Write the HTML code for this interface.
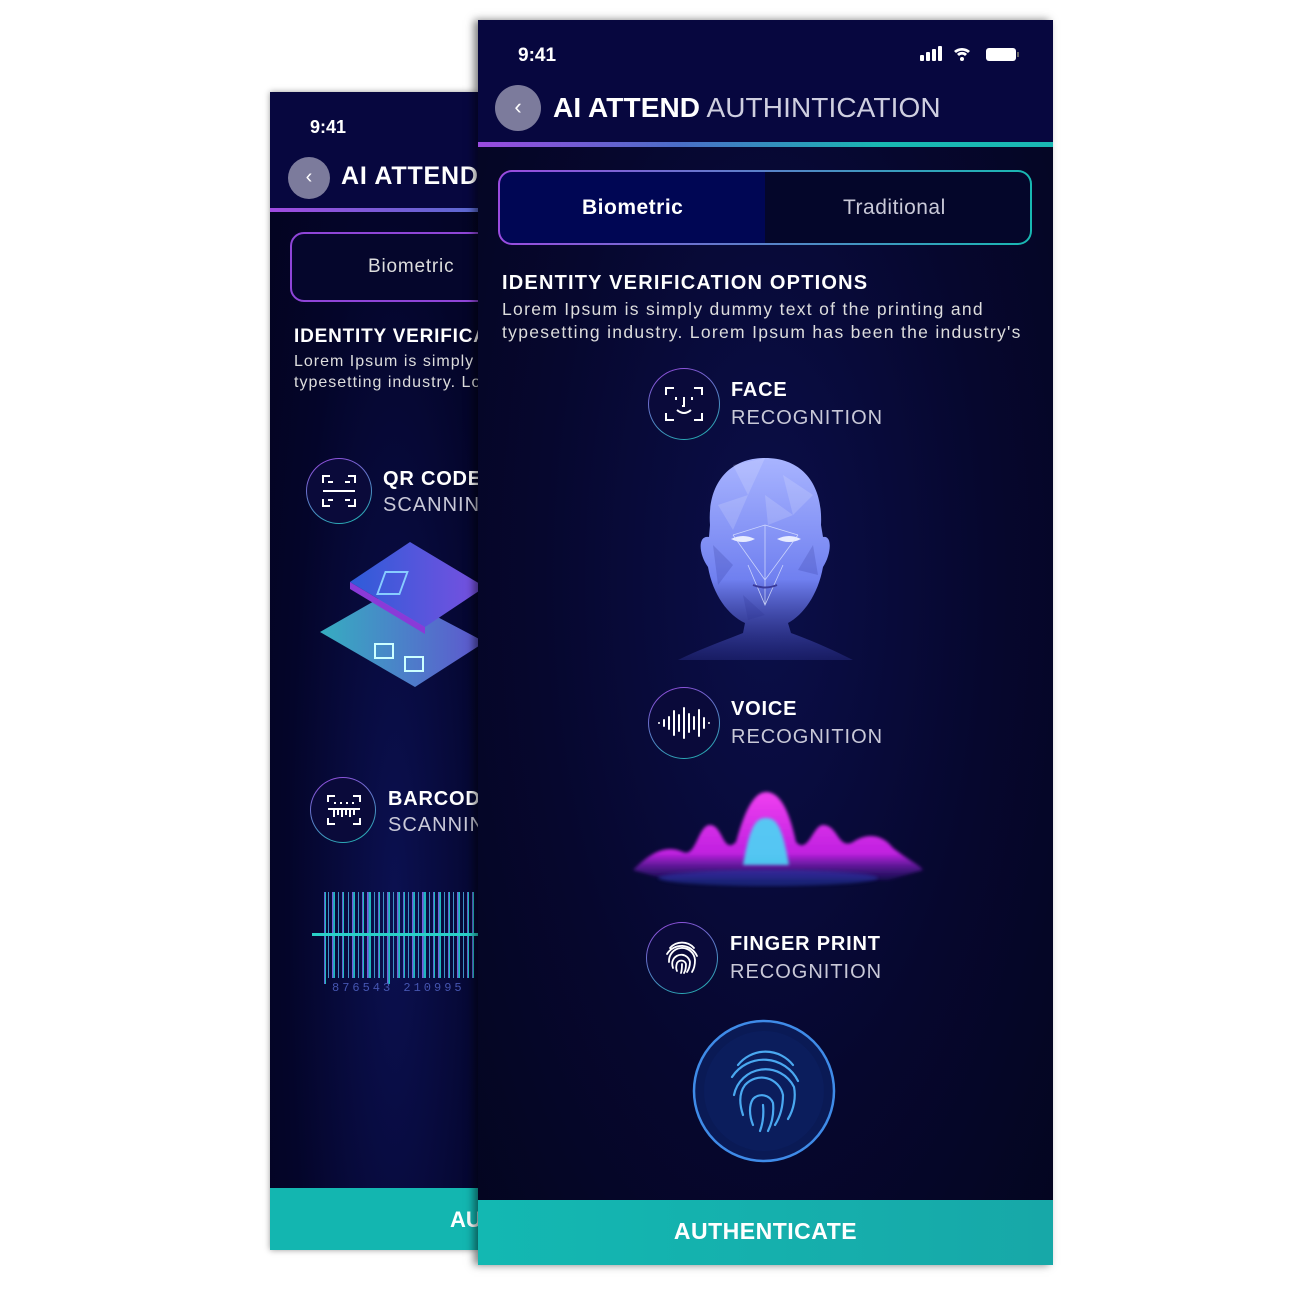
<!DOCTYPE html>
<html><head><meta charset="utf-8">
<style>
*{margin:0;padding:0;box-sizing:border-box}
body{width:1300px;height:1300px;background:#fff;position:relative;overflow:hidden;font-family:"Liberation Sans",sans-serif;color:#fff}
.abs{position:absolute}
.ph{position:absolute;overflow:hidden}
.b{font-weight:bold}
.ic{position:absolute;border-radius:50%;border:1.5px solid transparent;background:linear-gradient(#0a0a3a,#0a0a3a) padding-box,linear-gradient(160deg,#9b45e0,#1bb9b0) border-box}
.t1{font-weight:bold;font-size:20px;letter-spacing:.8px}
.t2{font-size:20px;color:#c9c9d8;letter-spacing:1px}
</style></head><body>

<!-- BACK PHONE -->
<div class="ph" style="left:270px;top:92px;width:208px;height:1158px;background:radial-gradient(ellipse at 60% 70%,#0b1050 0%,#04052a 60%,#03041f 100%);box-shadow:0 0 6px rgba(0,0,0,.4)">
  <div class="abs" style="left:0;top:0;width:208px;height:116px;background:#07073f"></div>
  <div class="abs" style="left:0;top:116px;width:208px;height:4px;background:linear-gradient(90deg,#a04be0,#5a6ad0)"></div>
  <div class="abs b" style="left:40px;top:25px;font-size:18px">9:41</div>
  <div class="abs" style="left:18px;top:65px;width:42px;height:42px;border-radius:50%;background:#7c7b9c;text-align:center;line-height:40px;font-size:20px">‹</div>
  <div class="abs b" style="left:71px;top:70px;font-size:25px;white-space:nowrap;letter-spacing:.8px">AI ATTEND</div>
  <div class="abs" style="left:20px;top:140px;width:220px;height:70px;border-radius:14px;border:2px solid #8f45d8;background:#05062c"></div>
  <div class="abs" style="left:98px;top:164px;font-size:19px;color:#ddd;letter-spacing:.8px">Biometric</div>
  <div class="abs b" style="left:24px;top:234px;font-size:19px;white-space:nowrap;letter-spacing:.8px">IDENTITY VERIFICATION</div>
  <div class="abs" style="left:24px;top:259px;font-size:16px;color:#ddd;white-space:nowrap;line-height:21px;letter-spacing:1px">Lorem Ipsum is simply<br>typesetting industry. Lorem</div>
  <div class="ic" style="left:36px;top:366px;width:66px;height:66px"></div>
  <svg class="abs" style="left:50px;top:380px" width="38" height="38" viewBox="0 0 38 38" fill="none" stroke="#fff" stroke-width="2"><path d="M3 11V4h7M28 4h7v7M35 27v7h-7M10 34H3v-7M8 10h5M25 10h5M3 19h32M8 28h5M25 28h5"/></svg>
  <div class="abs t1" style="left:113px;top:376px;white-space:nowrap">QR CODE</div>
  <div class="abs t2" style="left:113px;top:402px;white-space:nowrap">SCANNING</div>
  <svg class="abs" style="left:45px;top:440px" width="170" height="160" viewBox="0 0 170 160">
    <defs><linearGradient id="q1" x1="0" x2="1"><stop offset="0" stop-color="#3bbfd0"/><stop offset="1" stop-color="#6a5de0"/></linearGradient>
    <linearGradient id="q2" x1="0" x2="1"><stop offset="0" stop-color="#2e5cd8"/><stop offset="1" stop-color="#7a50e0"/></linearGradient></defs>
    <path d="M5 100 L75 60 L170 110 L100 155 Z" fill="url(#q1)" opacity=".9"/>
    <path d="M35 50 L95 10 L170 55 L110 95 Z" fill="url(#q2)"/>
    <path d="M35 50 L110 95 L110 102 L35 57Z" fill="#8a3ad8"/>
    <rect x="85" y="40" width="22" height="22" fill="none" stroke="#8cf" stroke-width="2" transform="skewX(-20)"/>
    <rect x="60" y="112" width="18" height="14" fill="none" stroke="#cff" stroke-width="2"/>
    <rect x="90" y="125" width="18" height="14" fill="none" stroke="#cff" stroke-width="2"/>
  </svg>
  <div class="ic" style="left:40px;top:685px;width:66px;height:66px"></div>
  <svg class="abs" style="left:55px;top:700px" width="38" height="36" viewBox="0 0 38 36" fill="none" stroke="#fff" stroke-width="2"><path d="M3 10V4h7M28 4h7v6M35 26v6h-7M10 32H3v-6M9 11h2M15 11h2M21 11h2M27 11h2M3 17h32M9 17v8M13 17v6M17 17v8M21 17v6M25 17v8M29 17v6"/></svg>
  <div class="abs t1" style="left:118px;top:696px;white-space:nowrap">BARCODE</div>
  <div class="abs t2" style="left:118px;top:722px;white-space:nowrap">SCANNING</div>
  <svg class="abs" style="left:42px;top:800px" width="170" height="100" viewBox="0 0 170 100">
    <defs><linearGradient id="bc" x1="0" x2="1"><stop offset="0" stop-color="#9a4ae0"/><stop offset=".4" stop-color="#3f78c8"/><stop offset=".6" stop-color="#20bcc0"/><stop offset="1" stop-color="#1ab8b8"/></linearGradient></defs>
    <g fill="url(#bc)">
      <rect x="12" y="0" width="2" height="92"/><rect x="16" y="0" width="1" height="86"/><rect x="20" y="0" width="3" height="86"/><rect x="26" y="0" width="1" height="86"/><rect x="30" y="0" width="2" height="86"/><rect x="36" y="0" width="1" height="86"/><rect x="40" y="0" width="3" height="86"/><rect x="46" y="0" width="1" height="86"/><rect x="50" y="0" width="2" height="86"/><rect x="55" y="0" width="4" height="86"/><rect x="62" y="0" width="1" height="86"/><rect x="66" y="0" width="2" height="86"/><rect x="71" y="0" width="1" height="86"/><rect x="75" y="0" width="3" height="92"/><rect x="81" y="0" width="1" height="86"/><rect x="85" y="0" width="3" height="86"/><rect x="91" y="0" width="2" height="86"/><rect x="96" y="0" width="1" height="86"/><rect x="100" y="0" width="3" height="86"/><rect x="106" y="0" width="1" height="86"/><rect x="110" y="0" width="4" height="86"/><rect x="117" y="0" width="1" height="86"/><rect x="121" y="0" width="2" height="86"/><rect x="126" y="0" width="3" height="86"/><rect x="132" y="0" width="1" height="86"/><rect x="136" y="0" width="2" height="86"/><rect x="141" y="0" width="1" height="86"/><rect x="145" y="0" width="3" height="86"/><rect x="151" y="0" width="1" height="86"/><rect x="155" y="0" width="2" height="86"/><rect x="160" y="0" width="2" height="86"/>
    </g>
    <rect x="0" y="41" width="170" height="3" fill="#2ad0c8"/>
    <text x="20" y="99" font-size="12" fill="#4555b0" letter-spacing="3" font-family="Liberation Mono">876543 210995</text>
  </svg>
  <div class="abs" style="left:0;top:1096px;width:208px;height:62px;background:#13b6b0"></div>
  <div class="abs b" style="left:180px;top:1115px;font-size:22px">AU</div>
</div>

<!-- FRONT PHONE -->
<div class="ph" style="left:478px;top:20px;width:575px;height:1245px;background:radial-gradient(ellipse at 50% 45%,#0b0f4a 0%,#06072e 55%,#04051f 100%);box-shadow:-4px 0 8px rgba(0,0,0,.5)">
  <div class="abs" style="left:0;top:0;width:575px;height:122px;background:#07073f"></div>
  <div class="abs" style="left:0;top:122px;width:575px;height:5px;background:linear-gradient(90deg,#9a4be0 0%,#4a6ec8 35%,#18b8b2 70%,#1ab8b4 100%)"></div>
  <div class="abs b" style="left:40px;top:25px;font-size:19px">9:41</div>
  <svg class="abs" style="left:442px;top:24px" width="100" height="20" viewBox="0 0 100 20" fill="#fff">
    <rect x="0" y="11" width="4" height="6" rx="1"/><rect x="6" y="8" width="4" height="9" rx="1"/><rect x="12" y="5" width="4" height="12" rx="1"/><rect x="18" y="2" width="4" height="15" rx="1"/>
    <path d="M34 7a12 12 0 0 1 16 0l-2 2a9 9 0 0 0-12 0z"/><path d="M37 10a7 7 0 0 1 10 0l-2 2a4 4 0 0 0-6 0z"/><circle cx="42" cy="15" r="2"/>
    <rect x="66" y="4" width="30" height="13" rx="3"/><rect x="97" y="8" width="2" height="5" fill="#666"/>
  </svg>
  <div class="abs" style="left:17px;top:65px;width:46px;height:46px;border-radius:50%;background:#7c7b9c;text-align:center;line-height:44px;font-size:22px">‹</div>
  <div class="abs" style="left:75px;top:72px;font-size:28px;white-space:nowrap;letter-spacing:.1px"><span class="b">AI ATTEND</span> <span style="color:#cfcfe0">AUTHINTICATION</span></div>
  <div class="abs" style="left:20px;top:150px;width:534px;height:75px;border-radius:14px;border:2.5px solid transparent;background:linear-gradient(90deg,#000654 0,#000654 50%,#04062a 50%) padding-box,linear-gradient(90deg,#9a4be0,#18b8b2) border-box"></div>
  <div class="abs b" style="left:104px;top:176px;font-size:21px;letter-spacing:.5px">Biometric</div>
  <div class="abs" style="left:365px;top:176px;font-size:21px;color:#c9c9d8;letter-spacing:.5px">Traditional</div>
  <div class="abs b" style="left:24px;top:252px;font-size:20px;white-space:nowrap;letter-spacing:1.2px">IDENTITY VERIFICATION OPTIONS</div>
  <div class="abs" style="left:24px;top:278px;font-size:17.5px;color:#ddd;line-height:23px;white-space:nowrap;letter-spacing:1.3px">Lorem Ipsum is simply dummy text of the printing and<br>typesetting industry. Lorem Ipsum has been the industry's</div>

  <!-- face -->
  <div class="ic" style="left:170px;top:348px;width:72px;height:72px"></div>
  <svg class="abs" style="left:186px;top:364px" width="40" height="40" viewBox="0 0 40 40" fill="none" stroke="#fff" stroke-width="2"><path d="M2 11V4h8M30 4h8v7M38 29v7h-8M10 36H2v-7M12 13v3M28 13v3M20 13v9h-2M13 26q7 6 14 0"/></svg>
  <div class="abs t1" style="left:253px;top:359px">FACE</div>
  <div class="abs t2" style="left:253px;top:387px">RECOGNITION</div>
  <svg class="abs" style="left:195px;top:435px" width="190" height="205" viewBox="0 0 190 205">
    <defs><linearGradient id="fh" x1="0" y1="0" x2="0" y2="1"><stop offset="0" stop-color="#a8b4ff"/><stop offset=".6" stop-color="#7080f0"/><stop offset="1" stop-color="#3a40b0" stop-opacity=".3"/></linearGradient></defs>
    <path d="M92 3 C130 3 150 30 148 70 L150 82 C160 80 158 100 150 112 C145 140 130 160 115 168 L118 178 C140 186 160 195 180 205 L5 205 C25 195 50 186 70 178 L72 168 C55 160 40 140 35 112 C26 100 24 80 36 82 L37 70 C34 30 55 3 92 3Z" fill="url(#fh)"/>
    <g fill="#ffffff" opacity=".15"><path d="M60 10 L92 3 L75 40Z"/><path d="M110 20 L140 40 L120 60Z"/><path d="M45 50 L75 40 L60 75Z"/><path d="M92 40 L120 60 L95 70Z"/></g>
    <g fill="#2a2f90" opacity=".2"><path d="M40 90 L60 110 L45 130Z"/><path d="M140 90 L125 115 L145 120Z"/><path d="M70 140 L92 160 L75 165Z"/></g>
    <path d="M58 84 q12-6 24 0 q-12 6-24 0ZM104 84 q12-6 24 0 q-12 6-24 0Z" fill="#e8ecff"/>
    <path d="M92 70 L92 150 M60 80 L92 125 L125 80 M75 110 L92 150 L110 110 M92 70 L60 80 M92 70 L125 80" stroke="#dfe6ff" stroke-width=".8" fill="none" opacity=".8"/>
    <path d="M80 130 q12 5 24 0" stroke="#3a3a9a" stroke-width="2" fill="none"/>
  </svg>

  <!-- voice -->
  <div class="ic" style="left:170px;top:667px;width:72px;height:72px"></div>
  <svg class="abs" style="left:178px;top:685px" width="56" height="36" viewBox="0 0 56 36" stroke="#fff" stroke-width="2" stroke-linecap="round"><path d="M3 18v0M8 15v6M13 12v12M18 6v24M23 10v16M28 3v30M33 9v18M38 12v12M43 5v26M48 13v10M53 18v0"/></svg>
  <div class="abs t1" style="left:253px;top:678px">VOICE</div>
  <div class="abs t2" style="left:253px;top:706px">RECOGNITION</div>
  <svg class="abs" style="left:150px;top:760px" width="300" height="120" viewBox="0 0 300 120">
    <defs><linearGradient id="vw" x1="0" y1="0" x2="0" y2="1"><stop offset="0" stop-color="#f040f0"/><stop offset=".7" stop-color="#c020e0"/><stop offset="1" stop-color="#6020c0" stop-opacity=".2"/></linearGradient>
    <filter id="bl"><feGaussianBlur stdDeviation="1.5"/></filter></defs>
    <path d="M5 90 C25 70 40 65 55 72 C68 78 70 45 82 45 C95 45 95 75 108 62 C118 25 128 12 138 12 C150 12 160 25 168 62 C180 75 185 45 195 45 C210 45 210 70 225 62 C240 52 255 55 265 68 C280 80 292 85 295 90 L260 100 L40 100Z" fill="url(#vw)" filter="url(#bl)"/>
    <path d="M115 85 C122 45 128 38 138 38 C148 38 154 45 161 85Z" fill="#49d8f5" opacity=".9" filter="url(#bl)"/>
    <ellipse cx="140" cy="98" rx="110" ry="8" fill="#2a3ab0" opacity=".5" filter="url(#bl)"/>
  </svg>

  <!-- fingerprint -->
  <div class="ic" style="left:168px;top:902px;width:72px;height:72px"></div>
  <svg class="abs" style="left:184px;top:918px" width="40" height="40" viewBox="0 0 40 40" fill="none" stroke="#fff" stroke-width="1.8" stroke-linecap="round"><path d="M8 10a16 16 0 0 1 24 0M5 16a17 17 0 0 1 30 2M7 24a13 13 0 0 1 26-2c0 6-1 9-3 12M11 30c-1-3-1-6 0-8a9 9 0 0 1 17 2c0 4-1 7-3 10M15 33c-1-2-1-5 0-8a5 5 0 0 1 9 1c0 3 0 6-2 9M20 26c0 3 0 6-1 9"/></svg>
  <div class="abs t1" style="left:252px;top:913px">FINGER PRINT</div>
  <div class="abs t2" style="left:252px;top:941px">RECOGNITION</div>
  <svg class="abs" style="left:210px;top:995px" width="150" height="155" viewBox="0 0 150 155" fill="none">
    <circle cx="76" cy="76" r="70" fill="#0a1a55" stroke="#3f8be8" stroke-width="2.5"/>
    <circle cx="76" cy="76" r="60" fill="#0c2060" opacity=".6"/>
    <g stroke="#4aa8f0" stroke-width="2.2" stroke-linecap="round">
      <path d="M50 50a35 35 0 0 1 55 0M44 62a38 38 0 0 1 66 4M46 80a32 32 0 0 1 60-8c2 10 0 22-6 32M55 100c-4-12-4-22 2-30a22 22 0 0 1 38 10c0 12-3 22-8 30M65 110c-4-10-4-20 0-26a12 12 0 0 1 20 4c1 10-1 20-5 28M75 90c1 10 0 18-3 26"/>
    </g>
  </svg>

  <div class="abs" style="left:0;top:1180px;width:575px;height:65px;background:linear-gradient(90deg,#13b8b2,#17a8a8)"></div>
  <div class="abs b" style="left:0;top:1198px;width:575px;text-align:center;font-size:23px;letter-spacing:.5px">AUTHENTICATE</div>
</div>
</body></html>
